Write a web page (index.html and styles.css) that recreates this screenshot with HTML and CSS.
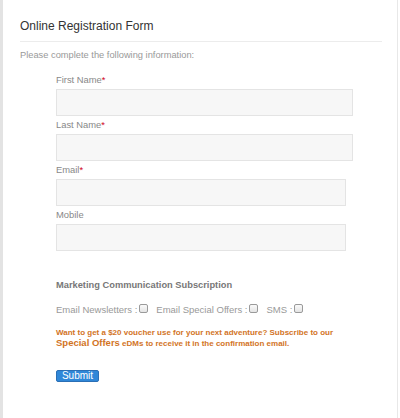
FILE: index.html
```html
<!DOCTYPE html>
<html>
<head>
<meta charset="utf-8">
<link rel="stylesheet" href="styles.css">
</head>
<body>
<div class="page">
  <div class="panel">
    <h1 class="title">Online Registration Form</h1>
    <hr class="rule">
    <p class="intro">Please complete the following information:</p>
    <form class="form">
      <div class="field">
        <label class="label">First Name<span class="req">*</span></label>
        <input class="input wide" type="text">
      </div>
      <div class="field">
        <label class="label">Last Name<span class="req">*</span></label>
        <input class="input wide" type="text">
      </div>
      <div class="field">
        <label class="label">Email<span class="req">*</span></label>
        <input class="input narrow" type="text">
      </div>
      <div class="field">
        <label class="label">Mobile</label>
        <input class="input narrow" type="text">
      </div>
      <h2 class="sub-title">Marketing Communication Subscription</h2>
      <div class="checks">
        <span class="check">Email Newsletters : <span class="box"></span></span>
        <span class="check">Email Special Offers : <span class="box"></span></span>
        <span class="check">SMS : <span class="box"></span></span>
      </div>
      <p class="promo">Want to get a $20 voucher use for your next adventure? Subscribe to our<br><span class="promo-big">Special Offers</span> eDMs to receive it in the confirmation email.</p>
      <button class="submit" type="button">Submit</button>
    </form>
  </div>
</div>
</body>
</html>
```

FILE: styles.css
```css
html, body {
  margin: 0;
  padding: 0;
  background: #fff;
}
body {
  font-family: "Liberation Sans", Arial, sans-serif;
  width: 400px;
  height: 418px;
  overflow: hidden;
}
.page {
  display: flex;
  height: 418px;
  border-left: 3px solid #e3e3e3;
  width: 394px;
  border-right: 1px solid #e8e8e8;
}
.panel {
  flex: 1;
  padding: 19px 15px 0 17px;
}
.title {
  margin: 0;
  font-size: 12px;
  line-height: 14px;
  font-weight: normal;
  color: #333;
}
.rule {
  margin: 8px 0 0 0;
  border: 0;
  border-top: 1px solid #ececec;
  height: 0;
}
.intro {
  margin: 6px 0 0 0;
  font-size: 9.3px;
  line-height: 14px;
  color: #999;
}
.form {
  padding-left: 36px;
  margin-top: 9px;
}
.field {
  display: flex;
  flex-direction: column;
}
.label {
  font-size: 9.4px;
  line-height: 18px;
  color: #888;
}
.req {
  color: #d0021b;
}
.input {
  box-sizing: border-box;
  height: 27px;
  margin: 0;
  background: #f7f7f7;
  border: 1px solid #e4e4e4;
  border-radius: 0;
  padding: 0;
}
.wide { width: 297px; }
.narrow { width: 290px; }
.sub-title {
  margin: 27px 0 0 0;
  font-size: 9.3px;
  line-height: 14px;
  font-weight: bold;
  color: #777;
}
.checks {
  display: flex;
  gap: 8px;
  margin-top: 11px;
  font-size: 9.5px;
  line-height: 14px;
  color: #999;
}
.check {
  display: inline-flex;
  align-items: flex-start;
  gap: 2px;
}
.box {
  box-sizing: border-box;
  width: 9px;
  height: 9px;
  margin-top: 1px;
  border: 1px solid #9a9a9a;
  border-radius: 2px;
  background: linear-gradient(#fafafa, #e4e4e4);
}
.promo {
  margin: 11px 0 0 0;
  font-size: 8px;
  line-height: 10px;
  font-weight: bold;
  color: #d2741f;
}
.promo-big {
  font-size: 9.5px;
}
.submit {
  display: block;
  margin-top: 21px;
  box-sizing: border-box;
  width: 43px;
  height: 12px;
  padding: 0;
  background: #2f87d8;
  border: 1px solid #2a6fb5;
  border-radius: 2px;
  color: #fff;
  font-family: "Liberation Sans", Arial, sans-serif;
  font-size: 10px;
  line-height: 10px;
}
```
